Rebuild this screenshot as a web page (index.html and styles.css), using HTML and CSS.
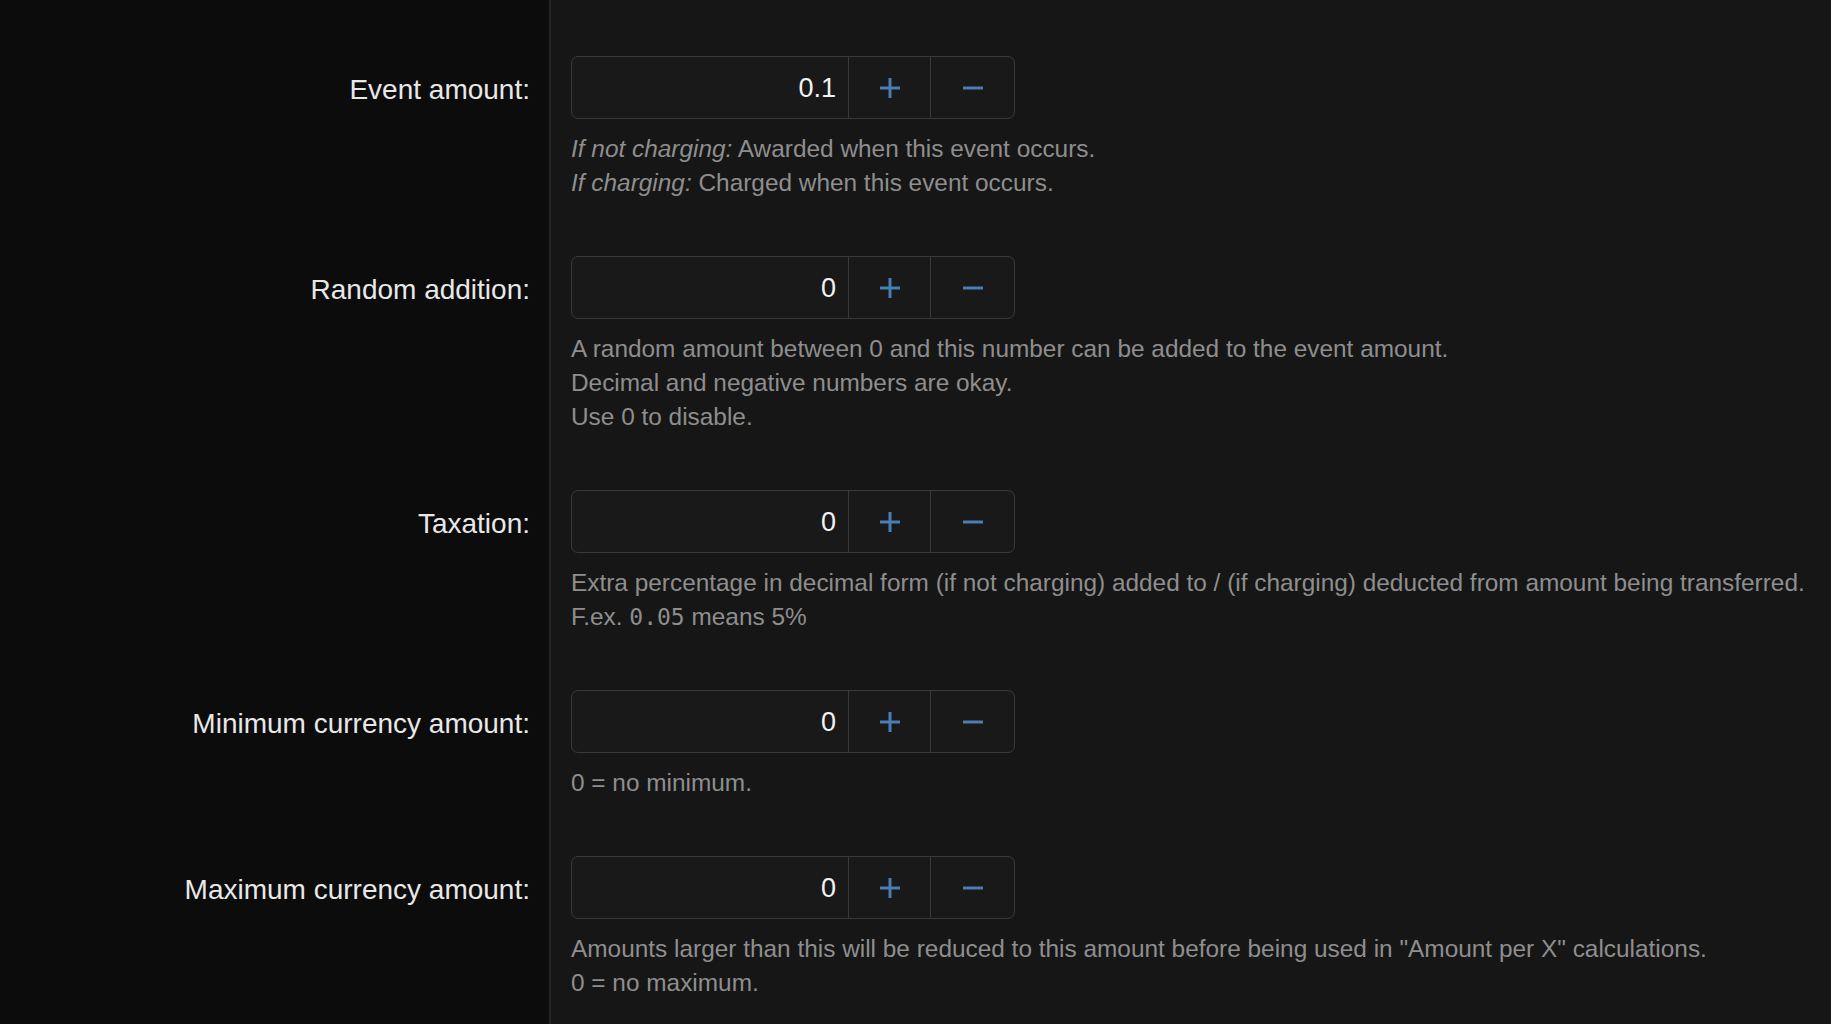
FILE: index.html
```html
<!DOCTYPE html>
<html lang="en">
<head>
  <meta charset="UTF-8" />
  <title>Currency settings</title>
  <link rel="stylesheet" href="styles.css">
</head>
<body>
  <div class="settings">

    <div class="field">
      <label class="field-label" for="event-amount">Event amount:</label>
      <div class="field-body">
        <div class="stepper">
          <input class="stepper-input" id="event-amount" value="0.1" />
          <button class="stepper-btn plus"><svg viewBox="0 0 22 22"><path d="M11 1v20M1 11h20"/></svg></button>
          <button class="stepper-btn minus"><svg viewBox="0 0 22 22"><path d="M1 11h20"/></svg></button>
        </div>
        <p class="help"><em>If not charging:</em> Awarded when this event occurs.<br><em>If charging:</em> Charged when this event occurs.</p>
      </div>
    </div>

    <div class="field">
      <label class="field-label" for="random-addition">Random addition:</label>
      <div class="field-body">
        <div class="stepper">
          <input class="stepper-input" id="random-addition" value="0" />
          <button class="stepper-btn plus"><svg viewBox="0 0 22 22"><path d="M11 1v20M1 11h20"/></svg></button>
          <button class="stepper-btn minus"><svg viewBox="0 0 22 22"><path d="M1 11h20"/></svg></button>
        </div>
        <p class="help">A random amount between 0 and this number can be added to the event amount.<br>Decimal and negative numbers are okay.<br>Use 0 to disable.</p>
      </div>
    </div>

    <div class="field">
      <label class="field-label" for="taxation">Taxation:</label>
      <div class="field-body">
        <div class="stepper">
          <input class="stepper-input" id="taxation" value="0" />
          <button class="stepper-btn plus"><svg viewBox="0 0 22 22"><path d="M11 1v20M1 11h20"/></svg></button>
          <button class="stepper-btn minus"><svg viewBox="0 0 22 22"><path d="M1 11h20"/></svg></button>
        </div>
        <p class="help">Extra percentage in decimal form (if not charging) added to / (if charging) deducted from amount being transferred.<br>F.ex. <code>0.05</code> means 5%</p>
      </div>
    </div>

    <div class="field">
      <label class="field-label" for="min-amount">Minimum currency amount:</label>
      <div class="field-body">
        <div class="stepper">
          <input class="stepper-input" id="min-amount" value="0" />
          <button class="stepper-btn plus"><svg viewBox="0 0 22 22"><path d="M11 1v20M1 11h20"/></svg></button>
          <button class="stepper-btn minus"><svg viewBox="0 0 22 22"><path d="M1 11h20"/></svg></button>
        </div>
        <p class="help">0 = no minimum.</p>
      </div>
    </div>

    <div class="field">
      <label class="field-label" for="max-amount">Maximum currency amount:</label>
      <div class="field-body">
        <div class="stepper">
          <input class="stepper-input" id="max-amount" value="0" />
          <button class="stepper-btn plus"><svg viewBox="0 0 22 22"><path d="M11 1v20M1 11h20"/></svg></button>
          <button class="stepper-btn minus"><svg viewBox="0 0 22 22"><path d="M1 11h20"/></svg></button>
        </div>
        <p class="help">Amounts larger than this will be reduced to this amount before being used in "Amount per X" calculations.<br>0 = no maximum.</p>
      </div>
    </div>

  </div>
</body>
</html>
```

FILE: styles.css
```css
body {
  margin: 0;
  font-family: "Liberation Sans", Arial, sans-serif;
  background-color: #161616;
  color: #e8e8e8;
}
.settings {
  box-sizing: border-box;
  min-height: 100vh;
  padding-top: 56px;
  background: linear-gradient(to right, #0c0c0c 549px, #242424 549px, #242424 551px, #161616 551px);
}
.field {
  display: grid;
  grid-template-columns: 550px 1fr;
  margin-bottom: 56px;
}
.field-label {
  box-sizing: border-box;
  height: 63px;
  padding: 4px 20px 0 0;
  display: flex;
  align-items: center;
  justify-content: flex-end;
  font-size: 28px;
  color: #e8e8e8;
}
.field-body {
  padding-left: 21px;
}
.stepper {
  display: flex;
  box-sizing: border-box;
  width: 444px;
  height: 63px;
  border: 1px solid #393939;
  border-radius: 7px;
  background-color: #191919;
  overflow: hidden;
}
.stepper-input {
  flex: 1;
  min-width: 0;
  border: none;
  outline: none;
  background: transparent;
  text-align: right;
  padding: 2px 12px 0 0;
  font-family: "Liberation Sans", Arial, sans-serif;
  font-size: 27px;
  color: #f2f2f2;
}
.stepper-btn {
  width: 82px;
  border: none;
  border-left: 1px solid #393939;
  background: transparent;
  display: flex;
  align-items: center;
  justify-content: center;
  padding: 0;
  cursor: pointer;
}
.stepper-btn.minus {
  width: 84px;
}
.stepper-btn svg {
  width: 22px;
  height: 22px;
  fill: none;
  stroke: #4a7db4;
  stroke-width: 3;
}
.help {
  margin: 13px 0 0;
  font-size: 24.4px;
  line-height: 34px;
  color: #8e8e8e;
  white-space: nowrap;
}
.help em {
  font-style: italic;
}
.help code {
  font-family: "DejaVu Sans Mono", monospace;
  font-size: 23px;
}
```
